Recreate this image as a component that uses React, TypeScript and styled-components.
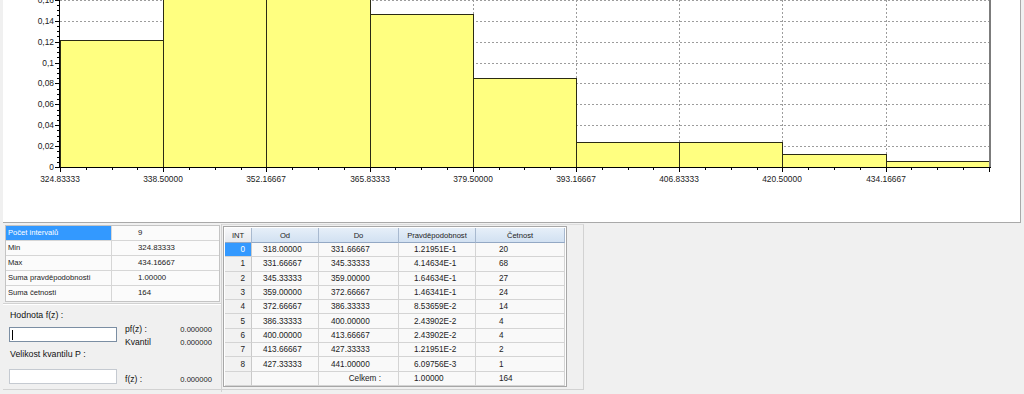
import { createGlobalStyle, styled } from 'styled-components'

const GlobalStyle = createGlobalStyle`
	html, body {
		margin: 0;
		padding: 0;
		background: #f0f0f0;
	}
	body {
		font-family: "Liberation Sans", Arial, sans-serif;
		color: #1a1a1a;
	}
`

// histogram data
const probs = [0.121951, 0.414634, 0.164634, 0.146341, 0.0853659, 0.0243902, 0.0243902, 0.0121951, 0.00609756]
const xLabels = ['324.83333', '338.50000', '352.16667', '365.83333', '379.50000', '393.16667', '406.83333', '420.50000', '434.16667']

const X0 = 60
const BW = 103.2
const Y0 = 167
const S = 1045

const xAt = (i: number) => Math.round(X0 + i * BW)
const yAt = (v: number) => Math.round(Y0 - v * S)

const fmtY = (v: number) => {
	if (v === 0) return '0'
	return v.toFixed(2).replace(/0$/, '').replace('.', ',')
}

const tableRows = [
	{ int: '0', od: '318.00000', to: '331.66667', p: '1.21951E-1', n: '20' },
	{ int: '1', od: '331.66667', to: '345.33333', p: '4.14634E-1', n: '68' },
	{ int: '2', od: '345.33333', to: '359.00000', p: '1.64634E-1', n: '27' },
	{ int: '3', od: '359.00000', to: '372.66667', p: '1.46341E-1', n: '24' },
	{ int: '4', od: '372.66667', to: '386.33333', p: '8.53659E-2', n: '14' },
	{ int: '5', od: '386.33333', to: '400.00000', p: '2.43902E-2', n: '4' },
	{ int: '6', od: '400.00000', to: '413.66667', p: '2.43902E-2', n: '4' },
	{ int: '7', od: '413.66667', to: '427.33333', p: '1.21951E-2', n: '2' },
	{ int: '8', od: '427.33333', to: '441.00000', p: '6.09756E-3', n: '1' },
]

const infoRows = [
	['Počet intervalů', '9'],
	['Min', '324.83333'],
	['Max', '434.16667'],
	['Suma pravděpodobnosti', '1.00000'],
	['Suma četnosti', '164'],
]

const Histogram = () => {
	const yTicks: number[] = []
	for (let k = 0; k <= 40; k++) yTicks.push(k * 0.005)
	const xTicks: number[] = []
	for (let j = 0; j <= 36; j++) xTicks.push(j)

	return <svg width={1017} height={222} viewBox="3 0 1017 222">
		{/* grid */}
		{[1, 2, 3, 4, 5, 6, 7, 8].map(k =>
			<line key={'h' + k} x1={60} x2={989} y1={yAt(k * 0.02) + 0.5} y2={yAt(k * 0.02) + 0.5}
				stroke="#9c9c9c" strokeDasharray="2 2"/>
		)}
		{[1, 2, 3, 4, 5, 6, 7, 8].map(i =>
			<line key={'v' + i} x1={xAt(i) + 0.5} x2={xAt(i) + 0.5} y1={0} y2={Y0}
				stroke="#9c9c9c" strokeDasharray="2 2"/>
		)}

		{/* bars */}
		{probs.map((p, i) =>
			<rect key={'b' + i} x={xAt(i) + 0.5} y={yAt(p) + 0.5}
				width={xAt(i + 1) - xAt(i)} height={Y0 - yAt(p)}
				fill="#ffff80" stroke="#2b2b14" strokeWidth={1}/>
		)}

		{/* plot frame */}
		<rect x={989} y={0} width={2} height={Y0 + 1} fill="#7c7c7c"/>
		<line x1={59.5} x2={59.5} y1={0} y2={Y0 + 1} stroke="#000"/>
		<line x1={59.5} x2={991} y1={Y0 + 0.5} y2={Y0 + 0.5} stroke="#000"/>

		{/* y ticks */}
		{yTicks.map((v, k) =>
			<line key={'yt' + k} x1={k % 4 === 0 ? 55 : 57} x2={60}
				y1={yAt(v) + 0.5} y2={yAt(v) + 0.5} stroke="#000"/>
		)}
		{[0, 1, 2, 3, 4, 5, 6, 7, 8].map(k =>
			<AxisText key={'yl' + k} x={54} y={yAt(k * 0.02) + 3} textAnchor="end">{fmtY(k * 0.02)}</AxisText>
		)}

		{/* x ticks */}
		{xTicks.map(j =>
			<line key={'xt' + j} x1={Math.round(X0 + j * BW / 4) + 0.5} x2={Math.round(X0 + j * BW / 4) + 0.5}
				y1={Y0} y2={j % 4 === 0 ? Y0 + 5 : Y0 + 3} stroke="#000"/>
		)}
		{xLabels.map((l, i) =>
			<AxisText key={'xl' + i} x={xAt(i)} y={181.5} textAnchor="middle">{l}</AxisText>
		)}
	</svg>
}

export default function App() {
	return <Window>
		<GlobalStyle/>

		<ChartPanel>
			<Histogram/>
		</ChartPanel>

		<BottomArea>

			<LeftPanel>
				<InfoGrid>
					{infoRows.map(([label, value], i) => <InfoRow key={label}>
						<InfoCell selected={i === 0}>{label}</InfoCell>
						<InfoValue>{value}</InfoValue>
					</InfoRow>)}
				</InfoGrid>

				<GroupBox>
					<FieldLabel>Hodnota f(z) :</FieldLabel>
					<FieldRow>
						<TextBox focused top={6}><Caret/></TextBox>
						<ResultColumn top={2}>
							<ResultLine><span>pf(z) :</span><ResultValue>0.000000</ResultValue></ResultLine>
							<ResultLine><span>Kvantil</span><ResultValue>0.000000</ResultValue></ResultLine>
						</ResultColumn>
					</FieldRow>

					<FieldLabel>Velikost kvantilu P :</FieldLabel>
					<FieldRow>
						<TextBox top={9}/>
						<ResultColumn top={13}>
							<ResultLine><span>f(z) :</span><ResultValue>0.000000</ResultValue></ResultLine>
						</ResultColumn>
					</FieldRow>
				</GroupBox>
			</LeftPanel>

			<RightPanel>
				<TableBox>
					<TableGrid>
						<HeadCell plain>INT</HeadCell>
						<HeadCell>Od</HeadCell>
						<HeadCell>Do</HeadCell>
						<HeadCell>Pravděpodobnost</HeadCell>
						<HeadCell>Četnost</HeadCell>

						{tableRows.map((r, i) => <TableRow key={r.int}>
							<IndexCell selected={i === 0}>{r.int}</IndexCell>
							<Cell pad={11}>{r.od}</Cell>
							<Cell pad={12}>{r.to}</Cell>
							<Cell pad={15}>{r.p}</Cell>
							<Cell pad={23}>{r.n}</Cell>
						</TableRow>)}

						<TableRow>
							<IndexCell/>
							<Cell pad={11}/>
							<Cell pad={0} alignRight>Celkem :</Cell>
							<Cell pad={15}>1.00000</Cell>
							<Cell pad={23}>164</Cell>
						</TableRow>
					</TableGrid>
				</TableBox>
			</RightPanel>

		</BottomArea>
	</Window>
}

const Window = styled.div`
	width: 1024px;
	height: 394px;
	padding-left: 3px;
	box-sizing: border-box;
	overflow: hidden;
	background: #f0f0f0;
`

const ChartPanel = styled.div`
	width: 1018px;
	height: 223px;
	box-sizing: border-box;
	background: #fff;
	border-right: 1px solid #a9a9a9;
	border-bottom: 1px solid #a9a9a9;
	overflow: hidden;

	svg {
		display: block;
	}
`

const AxisText = styled.text`
	font-family: "Liberation Sans", Arial, sans-serif;
	font-size: 8.4px;
	fill: #222;
`

const BottomArea = styled.div`
	display: flex;
	margin-top: 1px;
	height: 168px;
`

const LeftPanel = styled.div`
	width: 219px;
	display: flex;
	flex-direction: column;
	border-right: 1px solid #d2d2d2;
	box-sizing: border-box;
`

const InfoGrid = styled.div`
	margin: 1px 1px 0 2px;
	border: 1px solid #c4c4c4;
	background: #fbfbfb;
	display: flex;
	flex-direction: column;
`

const InfoRow = styled.div`
	display: grid;
	grid-template-columns: 106px 1fr;
	height: 15px;
	box-sizing: border-box;
	border-bottom: 1px solid #d6d6d6;

	&:last-child {
		border-bottom: none;
	}
`

const InfoCell = styled.div<{ selected?: boolean }>`
	font-size: 7.6px;
	line-height: 14px;
	padding-left: 2px;
	border-right: 1px solid #d6d6d6;
	background: ${p => p.selected ? '#3399ff' : 'transparent'};
	color: ${p => p.selected ? '#fff' : '#222'};
	white-space: nowrap;
`

const InfoValue = styled.div`
	font-size: 7.8px;
	line-height: 14px;
	padding-left: 26px;
	color: #222;
`

const GroupBox = styled.div`
	flex: 1;
	margin-top: 1px;
	margin-bottom: 2px;
	padding: 6px 0 0 6px;
	border-top: 1px solid #d2d2d2;
	border-bottom: 1px solid #d2d2d2;
	box-shadow: inset 0 1px 0 #fff;
`

const FieldLabel = styled.div`
	font-size: 8.8px;
	line-height: 11px;
	padding-left: 1px;
	color: #111;
`

const FieldRow = styled.div`
	display: flex;
	align-items: flex-start;
`

const TextBox = styled.div<{ focused?: boolean, top: number }>`
	width: 108px;
	height: 15px;
	margin-top: ${p => p.top}px;
	box-sizing: border-box;
	background: #fff;
	border: 1px solid ${p => p.focused ? '#7b8ea3' : '#c5cad1'};
	display: flex;
	align-items: center;
	padding-left: 2px;
`

const Caret = styled.span`
	width: 1px;
	height: 10px;
	background: #000;
`

const ResultColumn = styled.div<{ top: number }>`
	margin-left: 8px;
	margin-top: ${p => p.top}px;
	width: 87px;
`

const ResultLine = styled.div`
	display: flex;
	justify-content: space-between;
	font-size: 8.6px;
	line-height: 13px;
	color: #111;
`

const ResultValue = styled.span`
	font-size: 7.6px;
	color: #222;
`

const RightPanel = styled.div`
	width: 362px;
	padding: 1px 0 0 1px;
	border-top: 1px solid #dcdcdc;
	border-right: 1px solid #d2d2d2;
	border-bottom: 1px solid #d2d2d2;
	margin-bottom: 2px;
	box-sizing: border-box;
`

const TableBox = styled.div`
	width: 344px;
	height: 161px;
	box-sizing: border-box;
	border: 1px solid #a7a7a7;
	padding: 1px;
	background: #fff;
`

const TableGrid = styled.div`
	display: grid;
	grid-template-columns: 27px 67px 80px 77px 89px;
	grid-template-rows: 15px;
	grid-auto-rows: 14.3px;
`

const TableRow = styled.div`
	display: contents;
`

const HeadCell = styled.div<{ plain?: boolean }>`
	font-size: 7.6px;
	color: #222;
	display: flex;
	align-items: center;
	justify-content: center;
	box-sizing: border-box;
	background: ${p => p.plain
		? 'linear-gradient(#f7f8fa, #e6e9ee)'
		: 'linear-gradient(#e6eff9, #d2e1f2)'};
	border-right: 1px solid #a8b9cf;
	border-bottom: 1px solid #93a8c4;
	white-space: nowrap;
`

const IndexCell = styled.div<{ selected?: boolean }>`
	font-size: 8.2px;
	display: flex;
	align-items: center;
	justify-content: flex-end;
	padding-right: 6px;
	box-sizing: border-box;
	background: ${p => p.selected ? '#3399ff' : '#f2f2f2'};
	color: ${p => p.selected ? '#fff' : '#222'};
	border-right: 1px solid #c9c9c9;
	border-bottom: 1px solid #d4d4d4;
`

const Cell = styled.div<{ pad: number, alignRight?: boolean }>`
	font-size: 8.2px;
	color: #222;
	display: flex;
	align-items: center;
	justify-content: ${p => p.alignRight ? 'flex-end' : 'flex-start'};
	padding-left: ${p => p.pad}px;
	padding-right: ${p => p.alignRight ? 17 : 0}px;
	box-sizing: border-box;
	background: #f9f9f9;
	border-right: 1px solid #d4d4d4;
	border-bottom: 1px solid #d4d4d4;
	white-space: nowrap;
`
